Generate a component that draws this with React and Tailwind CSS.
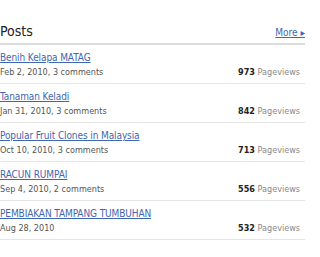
export default function App() {
  const posts = [
    { title: "Benih Kelapa MATAG", meta: "Feb 2, 2010, 3 comments", views: "973" },
    { title: "Tanaman Keladi", meta: "Jan 31, 2010, 3 comments", views: "842" },
    { title: "Popular Fruit Clones in Malaysia", meta: "Oct 10, 2010, 3 comments", views: "713" },
    { title: "RACUN RUMPAI", meta: "Sep 4, 2010, 2 comments", views: "556" },
    { title: "PEMBIAKAN TAMPANG TUMBUHAN", meta: "Aug 28, 2010", views: "532" },
  ];
  return (
    <div className="w-[320px] h-[257px] bg-white overflow-hidden" style={{ fontFamily: "'DejaVu Sans Condensed', sans-serif" }}>
      <div className="w-[305px] pt-[24px]">
        <div className="flex items-end justify-between border-b-2 border-[#dcdcdc] pb-[4px]">
          <span className="text-[14px] leading-[15px] text-[#222]">Posts</span>
          <a className="text-[10px] leading-[12px] text-[#4468b0] underline">More ▸</a>
        </div>
        {posts.map((p) => (
          <div key={p.title} className="h-[39px] border-b border-[#e6e6e6] flex flex-col pt-[6px] pr-[5px]">
            <a className="text-[10px] leading-[13px] text-[#3f66b0] underline self-start tracking-[-0.1px]">{p.title}</a>
            <div className="flex justify-between items-baseline mt-[2px]">
              <span className="text-[9px] leading-[12px] text-[#555]">{p.meta}</span>
              <span className="text-[9px] leading-[12px] text-[#888]">
                <b className="text-[#222] font-bold">{p.views}</b> Pageviews
              </span>
            </div>
          </div>
        ))}
      </div>
    </div>
  );
}
